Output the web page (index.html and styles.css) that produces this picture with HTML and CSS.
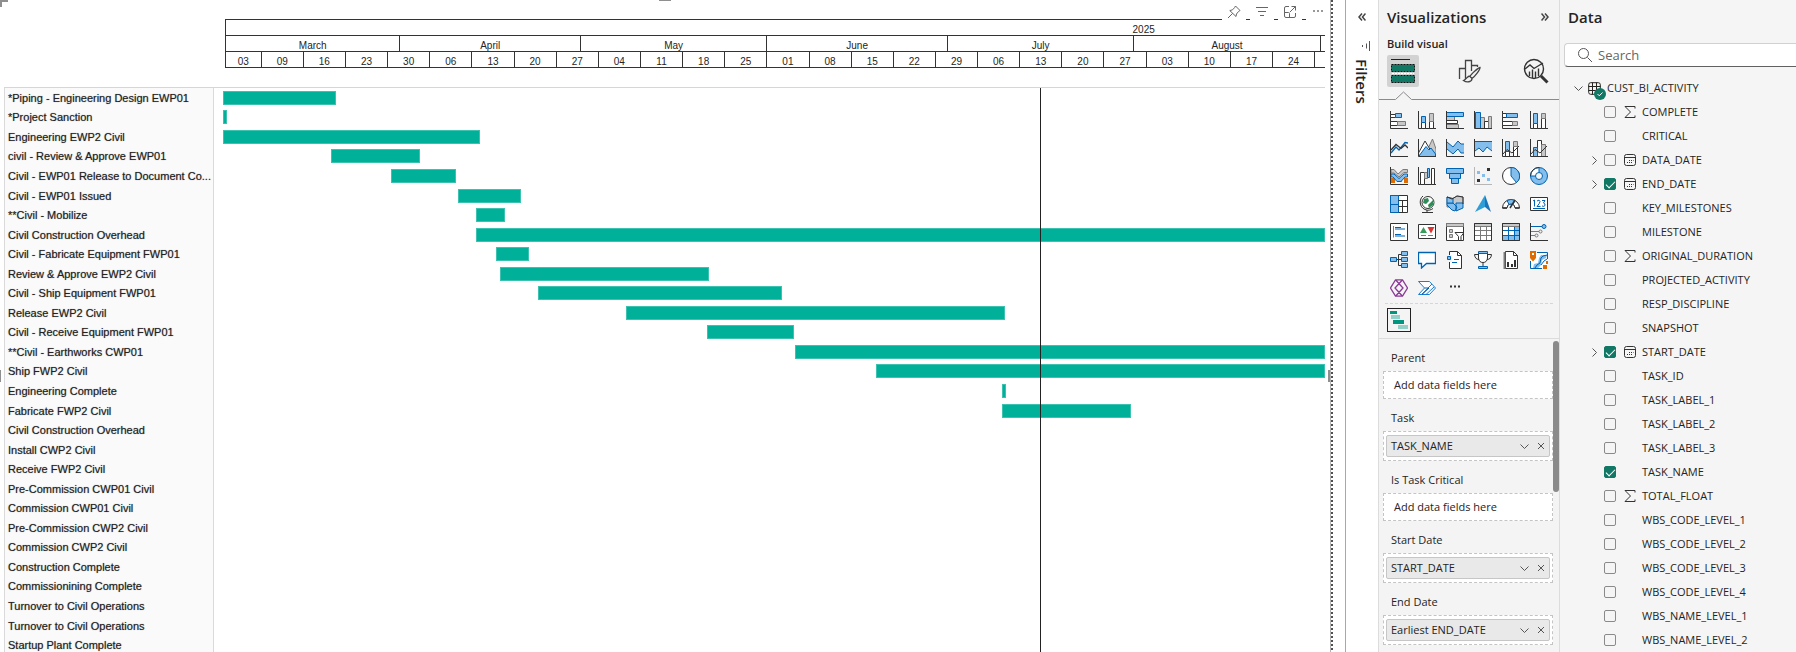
FILE: index.html
```html
<!DOCTYPE html>
<html lang="en">
<head>
<meta charset="utf-8">
<title>Schedule report</title>
<link rel="stylesheet" href="styles.css">
</head>
<body>
<main class="report">
  <span class="handle handle-corner"></span>
  <span class="handle handle-top"></span>
  <span class="handle handle-left"></span>
  <span class="handle handle-right"></span>
  <div class="visual-actions">
    <button type="button" aria-label="Pin visual"><svg width="14" height="14" viewBox="0 0 14 14"><path d="M8.5 1 13 5.5 11.5 6.5 9.5 9 9 11.5 2.8 5.6 5.5 4.8 7.6 2.6ZM5.6 8.4 1 13"/></svg></button>
    <button type="button" aria-label="Filters on visual"><svg width="14" height="14" viewBox="0 0 14 14"><path d="M1 2.5H13M3 6.5H11M5 10.5H9"/></svg></button>
    <button type="button" aria-label="Focus mode"><svg width="14" height="14" viewBox="0 0 14 14"><path d="M6 1.5H3A1.5 1.5 0 0 0 1.5 3V11A1.5 1.5 0 0 0 3 12.500H11A1.500 1.500 0 0 0 12.500 11V8M1.500 7.500H5.500A1 1 0 0 1 6.500 8.500V12.500M7 7 12.500 1.500M8.500 1.500H12.500V5.500"/></svg></button>
    <button type="button" aria-label="More options"><svg class="dots" width="14" height="14" viewBox="0 0 14 14"><circle cx="3" cy="6" r="1"/><circle cx="7" cy="6" r="1"/><circle cx="11" cy="6" r="1"/></svg></button>
  </div>
  <div class="timescale">
    <div class="scale-row"><span class="year">2025</span></div>
    <div class="scale-row" id="months"></div>
    <div class="scale-row" id="weeks"></div>
  </div>
  <div class="gantt">
    <ol class="task-names" id="task-names"></ol>
    <div class="plot">
      <ol class="bars" id="bars"></ol>
      <span class="today" id="today"></span>
    </div>
  </div>
</main>
<div class="page-edge"></div>

<aside class="filters">
  <button type="button" aria-label="Expand filters"><svg width="8" height="8" viewBox="0 0 8 8"><path d="M4 .5 1 4 4 7.500M7.500 .5 4.500 4 7.500 7.500"/></svg></button>
  <svg class="filter-mark" width="10" height="10" viewBox="0 0 10 10"><path d="M1.500 4V6M5.500 2.500V7.500M8.500 0V10"/></svg>
  <h2>Filters</h2>
</aside>

<aside class="viz">
  <header class="pane-head">
    <h2>Visualizations</h2>
    <button type="button" aria-label="Collapse visualizations"><svg width="8" height="8" viewBox="0 0 8 8"><path d="M.5 .5 3.500 4 .5 7.500M4 .5 7 4 4 7.500"/></svg></button>
  </header>
  <h3>Build visual</h3>
  <div class="tabs">
    <button type="button" class="tab active" aria-label="Build visual"><svg width="26" height="26" viewBox="0 0 26 26"><path d="M1 1.500H20" stroke="#222" fill="none"/><path d="M1.500 6.500H24.500V13.500H1.500ZM1.500 17.500H24.500V24.500H1.500Z" fill="#117865" stroke="#111" stroke-dasharray="2 1"/><path d="M2 15.500H24" stroke="#fff" stroke-dasharray="2 1"/></svg></button>
    <button type="button" class="tab" aria-label="Format visual"><svg width="24" height="24" viewBox="0 0 24 24" fill="none" stroke="#444" stroke-width="1.300"><path d="M1.500 20V9.500H7.500V20M7.500 10V1.500H13.500V12M13.500 6.500H19.500V8"/><path d="M22 8.500C20 9 13 15 12 17.500L14 19.500C17 17.500 22 11 22 8.500ZM12 17C9 17 9 20 5.500 21.500 9 24 14 23 14 19.500"/></svg></button>
    <button type="button" class="tab" aria-label="Analytics"><svg width="26" height="26" viewBox="0 0 26 26" fill="none" stroke="#333" stroke-width="1.400"><circle cx="11" cy="11" r="9.500"/><path d="M2 11 7 7 11 10.500 20 5M6.500 18V13.500M9.500 20V11.500M12.500 20V13.500M15.500 18V10.500"/><path d="M18 18 24.500 24.500" stroke-width="3"/></svg></button>
  </div>
  <svg class="notch" height="9" width="180" viewBox="0 0 180 9"><path d="M0 8.500H16.500L24.500 1 32.500 8.500H180"/></svg>
  <div class="gallery" id="gallery"></div>
  <div class="custom-visuals">
    <button type="button" aria-label="Gantt"><svg width="18" height="18" viewBox="0 0 18 18" shape-rendering="crispEdges"><path fill="#00957f" d="M0 0H7V3H0ZM3 9H14V13H3Z"/><path fill="#93d1c8" d="M1 4H10V8H1ZM8 14H18V18H8Z"/></svg></button>
  </div>
  <div class="wells" id="wells"></div>
</aside>

<aside class="data">
  <header class="pane-head"><h2>Data</h2></header>
  <label class="search">
    <svg width="16" height="16" viewBox="0 0 16 16"><circle cx="6.500" cy="6.500" r="5"/><path d="M10.500 10.500 15 15"/></svg>
    <input type="search" placeholder="Search" aria-label="Search">
  </label>
  <div class="table-row">
    <svg class="chevron" width="9" height="9" viewBox="0 0 9 9"><path d="M.5 2.500 4.500 6.500 8.500 2.500"/></svg>
    <span class="table-icon">
      <svg width="13" height="13" viewBox="0 0 13 13"><rect x=".7" y=".7" width="11.600" height="11.600" rx="2"/><path d="M.5 4.500H12.500M.5 8.500H12.500M4.500 .5V12.500M8.500 .5V12.500"/></svg>
      <svg class="badge" width="12" height="12" viewBox="0 0 12 12"><circle cx="6" cy="6" r="6"/><path d="M3.500 6 5.300 7.800 8.500 4.500"/></svg>
    </span>
    <span>CUST_BI_ACTIVITY</span>
  </div>
  <ul class="fields" id="fields"></ul>
</aside>
<script src="script.js"></script>
</body>
</html>
```

FILE: styles.css
```css
* { box-sizing: border-box; }

body {
  margin: 0;
  height: 100vh;
  display: flex;
  overflow: hidden;
  background: #fff;
  color: #252423;
  font: 11px/16px "Open Sans", "Noto Sans", sans-serif;
}

h2, h3, ol, ul { margin: 0; padding: 0; }
ol, ul { list-style: none; }
button {
  margin: 0;
  padding: 0;
  border: 0;
  background: none;
  color: inherit;
  font: inherit;
  display: flex;
  align-items: center;
  justify-content: center;
}
svg { display: block; flex: none; }

/* Report canvas */
.report {
  position: relative;
  flex: 1;
  min-width: 0;
  display: flex;
  flex-direction: column;
  padding: 19px 5px 0 4px;
  border-right: 1px solid #b3b3b3;
  overflow: hidden;
  font-family: "Liberation Sans", Arial, sans-serif;
}
.handle { position: absolute; background: #8f8f8f; }
.handle-corner { left: 0; top: 0; width: 8px; height: 7px; background: none; border: solid #8f8f8f; border-width: 2px 0 0 2px; }
.handle-top { top: 0; left: calc(50% - 6px); width: 12px; height: 1px; }
.handle-left { left: 0; top: 370px; width: 1px; height: 12px; }
.handle-right { right: 0; top: 370px; width: 2px; height: 12px; }

.visual-actions {
  position: absolute;
  z-index: 2;
  top: 0;
  right: 0;
  display: flex;
  gap: 4px;
}
.visual-actions button { width: 24px; height: 23px; background: #fff; }
.visual-actions svg { fill: none; stroke: #666; }
.visual-actions .dots { fill: #777; stroke: none; }

.timescale {
  flex: none;
  margin: 0 0 19px 221px;
  border-left: 1px solid #333;
  font-size: 10px;
}
.scale-row {
  display: flex;
  height: 16px;
  border-top: 1px solid #333;
  overflow: hidden;
  line-height: 19px;
}
.scale-row:last-child { height: 17px; border-bottom: 1px solid #333; }
.scale-row span {
  flex-basis: 0;
  min-width: 0;
  text-align: center;
  border-right: 1px solid #333;
}
.scale-row span:last-child { border-right: 0; }
.scale-row .year { flex: none; width: 167%; border: 0; }

.gantt {
  flex: 1;
  display: flex;
  min-height: 0;
  margin-bottom: -3px;
  border-top: 1px solid #d6d6d6;
}
.task-names {
  flex: none;
  width: 210px;
  margin-right: 9px;
  padding-left: 3px;
  display: flex;
  flex-direction: column;
  background: #fafafa;
  border: solid #dadada;
  border-width: 0 1px;
}
.task-names li {
  flex: 1;
  display: flex;
  align-items: center;
  white-space: nowrap;
  color: #222;
  text-shadow: 0 0 1px #888;
}
.plot { position: relative; flex: 1; display: flex; }
.bars { flex: 1; display: flex; flex-direction: column; }
.bars li { flex: 1; display: flex; align-items: center; }
.bars span { height: 14px; background: #01b099; border: 1px solid #3cc2b0; }
.today { position: absolute; top: 0; bottom: 0; width: 1px; background: #222; }

.page-edge {
  flex: none;
  width: 15px;
  border-right: 1px solid #a8a8a8;
  background: repeating-linear-gradient(#505050 0 2px, #fff 2px 4px) left top / 2px 100% no-repeat;
}

/* Filters pane */
.filters {
  flex: none;
  width: 32px;
  display: flex;
  flex-direction: column;
  align-items: center;
  padding-top: 13px;
}
.filters button svg, .pane-head svg { fill: none; stroke: #444; stroke-width: 1.500; }
.filter-mark { margin: 20px 7px 8px 0; align-self: flex-end; stroke: #555; }
.filters h2 { writing-mode: vertical-rl; font-size: 15px; line-height: 20px; font-weight: 600; }

/* Visualizations pane */
.viz {
  flex: none;
  width: 182px;
  display: flex;
  flex-direction: column;
  background: #f4f4f4;
  border: solid #dcdcdc;
  border-width: 0 1px;
}
.pane-head {
  display: flex;
  align-items: center;
  justify-content: space-between;
  height: 34px;
  padding: 0 10px 0 8px;
}
.pane-head h2 { font-size: 15px; line-height: 20px; font-weight: 600; }
.viz h3 { padding: 2px 8px 3px; font-size: 11px; line-height: 16px; font-weight: 600; }
.tabs { display: flex; justify-content: space-between; padding: 0 7px 0 8px; }
.tab { width: 32px; height: 32px; }
.tab.active { background: #d2d2d2; border-radius: 2px; }
.notch { margin-top: 4px; fill: none; stroke: #8a8a8a; }
.gallery {
  display: grid;
  grid-template-columns: repeat(6, 18px);
  gap: 10px;
  margin: 11px 6px 0;
  padding: 0 5px 6px;
  border-bottom: 1px dashed #d6d6d6;
}
.gallery button { width: 18px; height: 18px; }
.k { fill: none; stroke: #333; }
.w { fill: #fff; stroke: #333; }
.b { fill: #83beec; stroke: #0063b1; }
.l { fill: none; stroke: #0063b1; }
.g { fill: #c8c8c8; stroke: #7a7a7a; }
.s { fill: none; stroke: #7a7a7a; }
.fb { fill: #83beec; }
.fd { fill: #333; }
.fo { fill: #e06c00; }
.p { fill: none; stroke: #8b3a96; stroke-width: 1.300; }
.custom-visuals { padding: 4px 8px 6px; border-bottom: 1px solid #dcdcdc; }
.custom-visuals button { width: 24px; height: 24px; border: 1px solid #222; }

.wells {
  position: relative;
  flex: 1;
  min-height: 0;
  padding: 0 6px 0 4px;
  overflow: hidden;
}
.wells::after {
  content: "";
  position: absolute;
  top: 2px;
  right: 0;
  width: 6px;
  height: 151px;
  border-radius: 3px;
  background: #8a8a8a;
}
.wells h4 { margin: 0; padding: 10px 8px 4px; font-weight: 400; line-height: 18px; }
.drop { background: #fff; border: 1px dashed #c4c4c4; padding: 5px 10px; }
.drop.filled { padding: 3px 2px; }
.chip {
  display: flex;
  align-items: center;
  height: 22px;
  padding: 0 4px;
  gap: 8px;
  background: #e9e9e9;
  border: 1px solid #c6c6c6;
  border-radius: 2px;
}
.chip span { flex: 1; }
.chip svg { fill: none; stroke: #555; }

/* Data pane */
.data { flex: none; width: 236px; background: #f5f5f5; padding-left: 4px; }
.data .pane-head { padding-left: 4px; }
.search {
  display: flex;
  align-items: center;
  height: 24px;
  margin-top: 9px;
  padding-left: 12px;
  gap: 5px;
  background: #fff;
  border: 1px solid #d1d1d1;
  border-right: 0;
  border-bottom-color: #616161;
  border-radius: 4px 0 0 4px;
}
.search svg { fill: none; stroke: #555; }
.search input {
  flex: 1;
  min-width: 0;
  padding: 0;
  border: 0;
  outline: 0;
  background: none;
  font: 13px/18px "Open Sans", "Noto Sans", sans-serif;
}
.search input::placeholder { color: #666; opacity: 1; }
.table-row { display: flex; align-items: center; height: 24px; margin-top: 9px; padding-left: 10px; }
.chevron { fill: none; stroke: #555; }
.table-icon { position: relative; margin: 0 6px 0 5px; fill: none; stroke: #252423; }
.badge { position: absolute; left: 6px; top: 6px; fill: #117865; stroke: none; }
.badge path { fill: none; stroke: #fff; }
.fields li { height: 24px; padding-left: 26px; display: flex; align-items: center; }
.twist { width: 14px; display: flex; }
.fields label { display: flex; align-items: center; }
.kind { width: 26px; padding-left: 8px; }
.kind svg { fill: none; stroke: #333; }
.fields input {
  appearance: none;
  position: relative;
  width: 12px;
  height: 12px;
  margin: 0;
  border: 1px solid #8a8a8a;
  border-radius: 2px;
}
.fields input:checked { background: #117865; border-color: #117865; }
.fields input:checked::before {
  content: "";
  position: absolute;
  left: 1px;
  top: 2px;
  width: 8px;
  height: 4px;
  border: solid #fff;
  border-width: 0 0 1px 1px;
  transform: rotate(-45deg);
}
```

FILE: script.js
```js
const byId = id => document.getElementById(id);

/* Time axis: spans are weighted by the number of days they cover. */
const span = (text, days) => `<span style="flex-grow:${days}">${text}</span>`;
byId("months").innerHTML = [["March", 29], ["April", 30], ["May", 31], ["June", 30], ["July", 31], ["August", 31], ["", 0.7]]
  .map(m => span(...m)).join("");
const weeks = ["09","16","23","30","06","13","20","27","04","11","18","25","01","08","15","22","29","06","13","20","27","03","10","17","24"];
byId("weeks").innerHTML = span("03", 5.9) + weeks.map(w => span(w, 7)).join("") + span("", 1.700);

/* Tasks: name, then start and end in units of the visible range. */
const range = 1102;
const tasks = [
  ["*Piping - Engineering Design EWP01", 0, 113],
  ["*Project Sanction", 0, 4],
  ["Engineering EWP2 Civil", 0, 257],
  ["civil - Review &amp; Approve EWP01", 108, 197],
  ["Civil - EWP01 Release to Document Co...", 168, 233],
  ["Civil - EWP01 Issued", 235, 298],
  ["**Civil - Mobilize", 253, 282],
  ["Civil Construction Overhead", 253, 1102],
  ["Civil - Fabricate Equipment FWP01", 273, 306],
  ["Review &amp; Approve EWP2 Civil", 277, 486],
  ["Civil - Ship Equipment FWP01", 315, 559],
  ["Release EWP2 Civil", 403, 782],
  ["Civil - Receive Equipment FWP01", 484, 571],
  ["**Civil - Earthworks CWP01", 572, 1102],
  ["Ship FWP2 Civil", 653, 1102],
  ["Engineering Complete", 779, 783],
  ["Fabricate FWP2 Civil", 779, 908],
  ["Civil Construction Overhead"], ["Install CWP2 Civil"], ["Receive FWP2 Civil"],
  ["Pre-Commission CWP01 Civil"], ["Commission CWP01 Civil"], ["Pre-Commission CWP2 Civil"],
  ["Commission CWP2 Civil"], ["Construction Complete"], ["Commissionining Complete"],
  ["Turnover to Civil Operations"], ["Turnover to Civil Operations"], ["Startup Plant Complete"]
];
const pct = v => (v / range * 100).toFixed(3) + "%";
byId("task-names").innerHTML = tasks.map(t => `<li>${t[0]}</li>`).join("");
byId("bars").innerHTML = tasks.map(([, a, b]) =>
  `<li>${b ? `<span style="margin-left:${pct(a)};width:${pct(b - a)}"></span>` : ""}</li>`).join("");
byId("today").style.left = pct(817);

/* Visual gallery */
const axis = '<path class="k" d="M.5 0V17.5H18"/>';
const page = '<path class="w" d="M3.5 .5H11.5L15.5 4.5V17.5H3.5Z"/><path class="k" d="M11.5 .5V4.5H15.5"/>';
const gallery = [
  ["Stacked bar chart", axis + '<path class="w" d="M.5 3.5H5.5V6.500H.5ZM.5 10.5H7.5V14.5H.5Z"/><path class="b" d="M5.5 2.5H11.5V6.5H5.5Z"/><path class="g" d="M7.5 10.5H15.5V14.5H7.5Z"/>'],
  ["Stacked column chart", axis + '<path class="w" d="M3.5 11.5H7.5V17.5H3.5ZM11.5 10.5H15.5V17.5H11.5Z"/><path class="b" d="M3.5 5.5H7.5V11.5H3.5Z"/><path class="g" d="M11.5 2.5H15.5V10.5H11.5Z"/>'],
  ["Clustered bar chart", '<path class="g" d="M.5 5.5H8.5V9.5H.5Z"/><path class="w" d="M.5 9.5H11.5V12.5H.5Z"/><path class="g" d="M.5 13.5H12.5V17.5H.5Z"/><path class="b" d="M.5 1.5H17.5V5.5H.5Z"/><path class="k" d="M.5 0V17.5H18"/>'],
  ["Clustered column chart", '<path class="g" d="M6.5 6.5H10.500V17.5H6.5Z"/><path class="w" d="M10.5 10.5H14.5V17.5H10.5Z"/><path class="g" d="M14.5 5.5H17.5V17.5H14.5Z"/><path class="b" d="M1.5 1.5H6.5V17.5H1.5Z"/>' + axis],
  ["100% stacked bar chart", axis + '<path class="w" d="M.5 2.5H5.5V6.5H.5ZM.5 10.5H11.5V14.5H.5Z"/><path class="b" d="M4.5 2.5H15.5V6.5H4.5Z"/><path class="g" d="M10.5 10.5H15.5V14.5H10.5Z"/>'],
  ["100% stacked column chart", axis + '<path class="w" d="M3.5 12.5H7.5V17.5H3.5ZM11.5 7.5H15.5V17.5H11.5Z"/><path class="b" d="M3.5 2.5H7.5V12.5H3.5Z"/><path class="g" d="M11.5 2.5H15.5V7.5H11.5Z"/>'],
  ["Line chart", axis + '<path class="l" d="M1 14 6 8 9 11 15 3.500 18 4" stroke-width="1.300"/><path class="k" d="M1 11 6 5.500 11 9.500 15 6 18 9" stroke-width="1.300"/>'],
  ["Area chart", '<path class="g" d="M8 14 14.500 0 18 10V17H8Z"/><path class="w" d="M.5 14 7 2 13 12 9 17H1Z"/><path class="b" d="M1 17 8 7.500 11 11 13 9 17.500 15V17.5H1Z"/>' + axis],
  ["Stacked area chart", '<path class="fb" d="M1 3 7 8 12 2 15 5H18V14L15 14 12 10 7 15 1 10Z"/><path class="l" d="M1 3 7 8 12 2 15 5H18M1 10 7 15 12 10 15 14H18"/>' + axis],
  ["100% stacked area chart", '<path class="fb" d="M1 2H18V12L13 8 9 13 5 9 1 12Z"/><path class="l" d="M1 2.500H18M1 12 5 9 9 13 13 8 18 12"/>' + axis],
  ["Line and stacked column chart", '<path class="w" d="M3.5 9.5H7.5V17.5H3.5ZM11.5 7.5H15.5V17.5H11.5Z"/><path class="b" d="M3.5 2.5H7.5V12.5H3.5Z"/><path class="g" d="M11.500 2.500H15.500V7.500H11.500Z"/>' + axis + '<path class="k" d="M1 15 5 10.500 10 14 17 7"/>'],
  ["Line and clustered column chart", '<path class="w" d="M7.5 1.5H11.5V17.5H7.5Z"/><path class="b" d="M3.5 8.5H7.5V17.5H3.5Z"/><path class="g" d="M11.500 5.500H15.500V17.500H11.500Z"/>' + axis + '<path class="k" d="M1 15 5 10.500 10 14 17 7"/>'],
  ["Ribbon chart", '<path class="fo" d="M1 11H5V16H1ZM7 11H12V15H7ZM14 11H18V16H14Z"/><path class="g" d="M1 2.500H4L8 7 13 2.500H17.500V5.500H14L9 10 4 6 1 6Z"/><path class="b" d="M1 7 4 7 9 11.500 14 7H17.500V10H15L11 14.500H7L3 10H1Z"/>' + axis],
  ["Waterfall chart", axis + '<path class="w" d="M2.500 5.500H6.500V17.500H2.500ZM13.500 1.500H16.500V17.500H13.500Z"/><path class="g" d="M6.500 5.500H9.500V11.500H6.500Z"/><path class="b" d="M9.500 1.500H11.500V10.500H9.500Z"/>'],
  ["Funnel chart", '<path class="b" d="M.5 1.5H17.5V6.5H.5ZM3.5 6.5H14.5V11.5H3.5ZM5.5 11.500H12.500V16.500H5.500Z"/>'],
  ["Scatter chart", '<path class="s" d="M.5 0V17.5H18" opacity=".5"/><path class="fd" d="M13 1H16V4H13ZM3 12H6V15H3Z"/><path class="fb" d="M3 4H6V7H3ZM8 7H11V10H8ZM13 11H16V14H13Z"/>'],
  ["Pie chart", '<circle class="w" cx="9" cy="9" r="8.500"/><path class="b" d="M9 .5A8.500 8.500 0 0 1 14.500 15.500L9 9Z"/>'],
  ["Donut chart", '<circle cx="9" cy="9" r="6" fill="none" stroke="#83beec" stroke-width="5"/><path d="M9 3A6 6 0 0 0 3 9" fill="none" stroke="#fff" stroke-width="5"/><circle class="l" cx="9" cy="9" r="8.500"/><circle class="l" cx="9" cy="9" r="3.500"/><path class="l" d="M9 .5V5.500M.5 9H5.500"/><path class="k" d="M.5 9A8.500 8.500 0 0 1 9 .5"/>'],
  ["Treemap", '<path class="w" d="M.5 .5H17.5V17.5H.5Z"/><path class="b" d="M.5 .5H8.500V17.5H.5Z"/><path class="l" d="M.5 9.5H8.500"/><path class="k" d="M8.500 5.500H17.5M12.500 5.500V17.5M8.500 11.500H17.5"/>'],
  ["Map", '<circle class="w" cx="10" cy="7.500" r="6"/><path fill="#2e8b57" d="M6 4 10 3 11 6 8 9 5 8ZM12 8 15 5 15 10 11 13 10 10Z"/><path class="k" d="M5 1C1 4 1 12 7 14.500 10 16 13 15 15 13.500M9 15V17.500M4 17.500H15"/>'],
  ["Filled map", '<path class="g" d="M1 2 6 4 11 1 17 2V8L11 12H1Z"/><path class="b" d="M1 8H7L11 12 9 16 6 15 1 10ZM10 8H17V13L10 16Z"/><path class="b" d="M1 2 7 3.500V8H1Z"/><path class="k" d="M1 2 6 4 11 1 17 2V9"/>'],
  ["Azure map", '<path fill="#2f9ed6" d="M11 0 1 17 11 12Z"/><path fill="#1b75bb" d="M11 0 17 17 11 12Z"/>'],
  ["Gauge", '<path class="w" d="M.5 13A8.500 8.500 0 0 1 17.500 13H13A4 4 0 0 0 5 13Z"/><path class="b" d="M5 5.500A8.500 8.500 0 0 1 13 5.500L11 9.500A4 4 0 0 0 7 9.500Z"/><path class="k" d="M8 13 13 5M.5 13H5M13 13H17.500" stroke-width="1.500"/>'],
  ["Card", '<path class="w" d="M.5 2.5H17.5V15.5H.5Z"/><path class="l" d="M3 6 4.500 5V11.500M7 6Q9.500 4 10 6.500 10 8 7 11.500H10.500M12 5.500H15L13.500 8Q15.500 8.500 15 10.500 14 12 12 11M3 13.500H15"/>'],
  ["Multi-row card", '<path class="w" d="M.5 .5H17.5V17.5H.5Z"/><path class="l" d="M5 4.500H11M5 6H15M5 11.500H11M5 13H15"/><path class="s" d="M3.500 3V14.500"/>'],
  ["KPI", '<path class="w" d="M.5 1.5H17.5V15.5H.5Z"/><path fill="#3a9b5c" d="M2 10 5.500 4 9 10Z"/><path fill="#d33" d="M9.500 4H16.500L13 10.500Z"/><path class="s" d="M3 12.500H8M10 12.500H15"/>'],
  ["Slicer", '<path class="w" d="M.5 .5H17.5V17.5H.5Z"/><path class="g" d="M.5 .5H17.5V3.500H.5ZM3.500 6.500H6.500V9.500H3.500ZM3.500 11.500H6.500V14.500H3.500Z"/><path class="w" d="M9 9.500H18L15 13.500V17.500H12.500V13.500Z"/>'],
  ["Table", '<path class="w" d="M.5 .5H17.5V17.5H.5Z"/><path class="s" d="M.5 7.500H17.5M.5 12.500H17.5M6.500 4V17M12.500 4V17"/><path class="g" d="M.5 .5H17.5V3.500H.5Z"/><path class="k" d="M.5 .5H17.5V17.5H.5Z"/>'],
  ["Matrix", '<path class="w" d="M.5 .5H17.5V17.5H.5Z"/><path class="fb" d="M12 4H17V17H1V13H12Z"/><path class="l" d="M.5 7.500H17.5M.5 12.500H17.5M6.500 4V17M12.500 4V17"/><path class="g" d="M.5 .5H17.5V3.500H.5Z"/><path class="k" d="M.5 .5H17.5V17.5H.5Z"/>'],
  ["Key influencers", axis + '<path class="l" d="M1 3.500H12"/><path class="s" d="M1 8.500H9M1 12.500H5"/><circle class="b" cx="14" cy="3.500" r="2"/><circle class="s" cx="10.500" cy="8.500" r="1.500"/><circle class="s" cx="6.500" cy="12.500" r="1.500"/>'],
  ["Decomposition tree", '<path class="k" d="M6 8.500H11M11 3.500H8.500V14.500H11"/><path class="b" d="M.5 6.500H6.500V10.500H.5ZM11.500 .5H17.5V4.500H11.500ZM11.500 6.500H17.5V10.500H11.500ZM11.500 12.500H17.5V16.500H11.500Z"/>'],
  ["Q&amp;A", '<path d="M.5 1.500H17.5V12.500H8.500L3.500 17V12.500H.5Z" fill="#fff" stroke="#0063b1" stroke-width="1.300"/>'],
  ["Narrative", page + '<path fill="#f4f4f4" d="M1 4H6V11H1Z"/><path class="b" d="M1.500 5.500H4.500V8.500H1.500Z"/><path class="l" d="M8 8.500H13M6 11.500H11"/>'],
  ["Goals", '<path class="w" d="M4.500 1.500H13.500V7Q13 11.500 9 11.500 5 11.500 4.500 7Z"/><path class="k" d="M4.500 3.500H.5Q1 8.500 5 8.500M13.500 3.500H17.500Q17 8.500 13 8.500M9 11.500V15"/><path class="b" d="M4.500 .5H13.500V2.500H4.500ZM4.500 15.500H13.500V17.500H4.500Z"/>'],
  ["Paginated report", page + '<path class="s" d="M2.500 1V18" stroke-width="2"/><path class="fd" d="M5 11H7V16H5ZM9 13H11V16H9ZM12 9H14V16H12Z"/>'],
  ["ArcGIS map", '<path fill="#fff" d="M3 2H17V17H1V8Z"/><path class="l" d="M7 1.500H17.500V8M.5 10V17.500H12"/><path class="fb" d="M11 4H17L16 7 12 9 11 14 8 17H3L4 13 8 12 9 7Z"/><path class="l" d="M17 4 13 5 11 7 10 12 7 14 5 17M17 8 14 10 11 14"/><path class="fo" d="M0 0H6V7L3 10.500 0 7ZM16 10H19V13H16ZM13 14H17V18H13Z"/><path fill="#fff" d="M2 2H4V4H2Z"/>'],
  ["Power Apps", '<path class="p" d="M5.500 .8H12.500L17.500 9 12.500 17.200H5.500L.5 9ZM5.500 .8 13 9 5.500 17.200M12.500 .8 5 9 12.500 17.200"/>'],
  ["Power Automate", '<path fill="#fff" stroke="#1a7fd4" d="M.5 2.500H11.500L17.500 9 11.500 15.500H.5L6.500 9ZM3.500 15.500 14 5M8 15.500 16 8"/><path class="l" d="M6.500 9H11L4 15.500"/>'],
  ["More visuals", '<path fill="#333" d="M4 6.500H6V8.500H4ZM8 6.500H10V8.500H8ZM12 6.500H14V8.500H12Z"/>']
];
byId("gallery").innerHTML = gallery.map(([name, art]) =>
  `<button type="button" aria-label="${name}"><svg width="18" height="18" viewBox="0 0 18 18">${art}</svg></button>`).join("");

/* Field wells */
const wells = [["Parent"], ["Task", "TASK_NAME"], ["Is Task Critical"], ["Start Date", "START_DATE"], ["End Date", "Earliest END_DATE"]];
byId("wells").innerHTML = wells.map(([label, field]) => `<h4>${label}</h4>` + (field
  ? `<div class="drop filled"><div class="chip"><span>${field}</span>
     <button type="button" aria-label="Options for ${field}"><svg width="9" height="9" viewBox="0 0 9 9"><path d="M.5 2.500 4.500 6.500 8.500 2.500"/></svg></button>
     <button type="button" aria-label="Remove ${field}"><svg width="8" height="8" viewBox="0 0 8 8"><path d="M1 1 7 7M7 1 1 7"/></svg></button></div></div>`
  : '<div class="drop">Add data fields here</div>')).join("");

/* Field list */
const sigma = '<svg width="12" height="12" viewBox="0 0 12 12"><path d="M11 2.500V.5H1L6.500 6 1 11.500H11V9.500"/></svg>';
const calendar = '<svg width="12" height="12" viewBox="0 0 12 12"><rect x=".5" y=".5" width="11" height="11" rx="2"/><path d="M.5 3.500H11.500"/><path d="M5 6.500H9.500M3 8.500H8" stroke-dasharray="1 1"/></svg>';
const fields = [
  ["COMPLETE", "sum"], ["CRITICAL"], ["DATA_DATE", "date"], ["END_DATE", "date", true], ["KEY_MILESTONES"],
  ["MILESTONE"], ["ORIGINAL_DURATION", "sum"], ["PROJECTED_ACTIVITY"], ["RESP_DISCIPLINE"], ["SNAPSHOT"],
  ["START_DATE", "date", true], ["TASK_ID"], ["TASK_LABEL_1"], ["TASK_LABEL_2"], ["TASK_LABEL_3"],
  ["TASK_NAME", "", true], ["TOTAL_FLOAT", "sum"], ["WBS_CODE_LEVEL_1"], ["WBS_CODE_LEVEL_2"],
  ["WBS_CODE_LEVEL_3"], ["WBS_CODE_LEVEL_4"], ["WBS_NAME_LEVEL_1"], ["WBS_NAME_LEVEL_2"]
];
byId("fields").innerHTML = fields.map(([name, kind, on]) => `<li>
  <span class="twist">${kind === "date" ? '<svg class="chevron" width="9" height="9" viewBox="0 0 9 9"><path d="M2.500 .5 6.500 4.500 2.500 8.500"/></svg>' : ""}</span>
  <label><input type="checkbox"${on ? " checked" : ""}><span class="kind">${kind === "sum" ? sigma : kind === "date" ? calendar : ""}</span>${name}</label></li>`).join("");
```
